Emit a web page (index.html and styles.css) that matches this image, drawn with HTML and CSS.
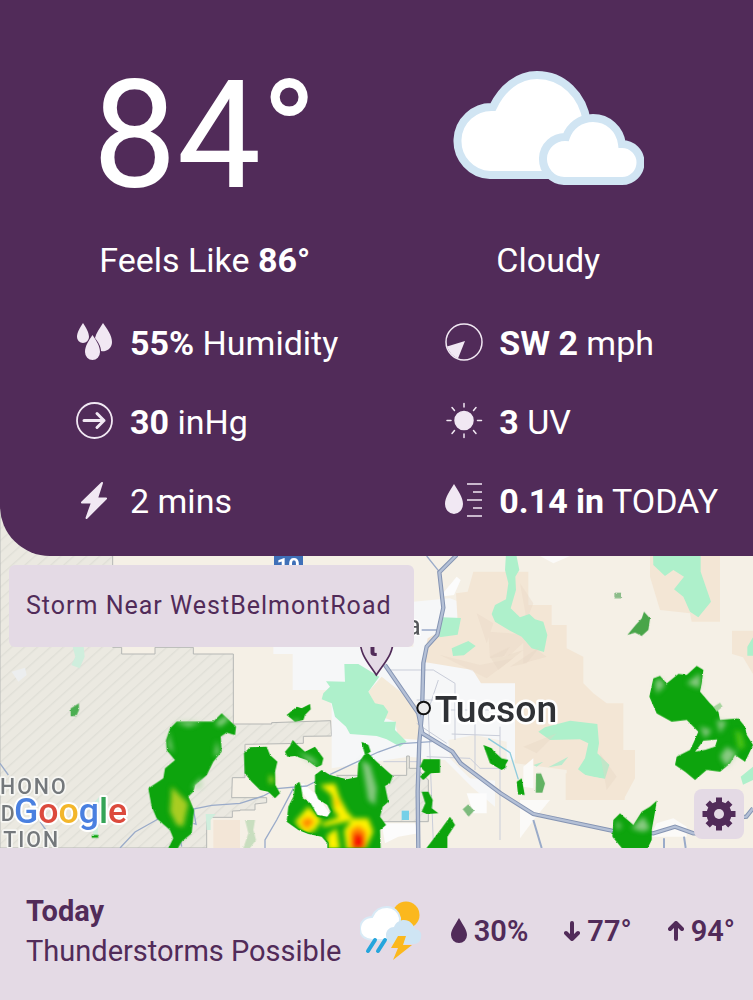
FILE: index.html
```html
<!DOCTYPE html>
<html lang="en">
<head>
    <meta charset="UTF-8">
    <meta name="viewport" content="width=device-width, initial-scale=1.0">
    <title>Weather</title>
    <link rel="stylesheet" href="styles.css">
</head>
<body>
    <main class="app">
        <section class="current">
            <div class="summary">
                <div class="summary-col">
                    <div class="temp">84°</div>
                    <div class="label">Feels Like <b>86°</b></div>
                </div>
                <div class="summary-col">
                    <div class="sky">
                        <svg class="cloud" viewBox="0 0 192 116">
                            <path d="M38 105a33 33 0 0 1 3-68C50 18 66 5 85 5c26 0 46 20 50 47v53z" fill="#fff" stroke="#d1e5f3" stroke-width="8"/>
                            <path d="M112 111a22 22 0 0 1 2-44c4-11 14-19 27-19 15 0 27 11 29 26a18.500 18.500 0 0 1 0 37z" fill="#fff" stroke="#d1e5f3" stroke-width="8"/>
                        </svg>
                    </div>
                    <div class="label">Cloudy</div>
                </div>
            </div>
            <ul class="details">
                <li>
                    <svg class="icon" viewBox="0 0 38 38" fill="#f1e8f3">
                        <path d="M7 0c3 5 6 9 6 14a6 6 0 0 1-12 0c0-5 3-9 6-14zM27 0c4 6 9 12 9 19a9 9 0 0 1-11 9c0-5-3-9-6-13 1-5 5-10 8-15z"/>
                        <path d="M16.500 12c4 6 7.500 11 7.500 17a7.500 8 0 0 1-15 0c0-6 3.500-11 7.500-17z"/>
                    </svg>
                    <span><b>55%</b> Humidity</span>
                </li>
                <li>
                    <svg class="icon" viewBox="0 0 38 38" fill="none" stroke="#f1e8f3">
                        <circle cx="19" cy="19" r="18" stroke-width="1.500"/>
                        <path d="M20 18L2 23.500C4 29 7 33 13 35.500z" fill="#f1e8f3" stroke="none"/>
                    </svg>
                    <span><b>SW 2</b> mph</span>
                </li>
                <li>
                    <svg class="icon" viewBox="0 0 38 38" fill="none" stroke="#f1e8f3">
                        <circle cx="18.500" cy="18.500" r="17.500" stroke-width="1.800"/>
                        <path d="M8 18.500h20M21 11.500l7 7-7 7" stroke-width="3" stroke-linecap="round" stroke-linejoin="round"/>
                    </svg>
                    <span><b>30</b> inHg</span>
                </li>
                <li>
                    <svg class="icon" viewBox="0 0 38 38" fill="#f1e8f3" stroke="#f1e8f3" stroke-width="1.500" stroke-linecap="round">
                        <circle cx="19" cy="18.500" r="9"/>
                        <path d="M19 1.500V5M19 32v3.500M2 18.500h4M32.500 18.500h4M7 5.500l2.500 3M31 5.500l-2.500 3M7 31.500l2.500-3M31 31.500l-2.500-3"/>
                    </svg>
                    <span><b>3</b> UV</span>
                </li>
                <li>
                    <svg class="icon" viewBox="0 0 38 38" fill="#f1e8f3" stroke="#f1e8f3" stroke-width="2" stroke-linejoin="round">
                        <path d="M26 2L6 21.500h10L10.500 37 30 17.500H21z"/>
                    </svg>
                    <span>2 mins</span>
                </li>
                <li>
                    <svg class="icon" viewBox="0 0 38 38" fill="#f1e8f3">
                        <path d="M9 3c4 7 9 13 9 20a9 10 0 0 1-18 0c0-7 5-13 9-20z"/>
                        <path d="M22 3h15M28 11h9M22 19h15M28 27h9M22 35h15" stroke="#f1e8f3" stroke-width="1.600"/>
                    </svg>
                    <span><b>0.14 in</b> TODAY</span>
                </li>
            </ul>
        </section>

        <section class="radar">
            <svg class="map" viewBox="0 -105 2259 1029" preserveAspectRatio="xMidYMid slice" role="img" aria-label="Radar map of Tucson">
                <defs>
                    <pattern id="hatch" width="26" height="26" patternUnits="userSpaceOnUse" patternTransform="rotate(48)">
                        <rect width="26" height="26" fill="#ebe9e1"/>
                        <rect width="4" height="26" fill="#e0dfd7"/>
                    </pattern>
                    <filter id="soft" x="-30%" y="-30%" width="160%" height="160%"><feGaussianBlur stdDeviation="8"/></filter>
                    <!-- ragged radar edges -->
                    <filter id="ragged" x="-5%" y="-5%" width="110%" height="110%">
                        <feTurbulence type="fractalNoise" baseFrequency="0.13" numOctaves="1" seed="4" result="noise"/>
                        <feDisplacementMap in="SourceGraphic" in2="noise" scale="7" xChannelSelector="R" yChannelSelector="G"/>
                        <feGaussianBlur stdDeviation="0.500"/>
                    </filter>
                    <clipPath id="stormClip">
                        <path d="M230 710L245 695 270 710 320 722 356 716 360 670 385 650 450 710 428 738 438 785 420 800 412 830 430 855 414 870 416 924H266V908L245 885 205 877 175 865 146 842 150 800 165 770 178 735 186 775 210 794 232 830 262 836 278 815 266 792 240 775 228 752z"/>
                    </clipPath>
                </defs>
                <rect y="-105" width="2259" height="1029" fill="#f5f0e6"/>

                <!-- land -->
                <path d="M0-105h338v427h27v20h100v-20h115v20h120v210h115v-4l177-6 3 46-85 1v21l-174 3h-1v100h-38l-2 60h105v15l-35 4v18h-45v2l-23 1v19h-77v92H0z" fill="url(#hatch)" stroke="#b5b7b5" stroke-width="3"/>
                <path d="M218 320h33l3 30-15 35-25-10 12-25zM280 790l18-20-5 120h-14z" fill="#cfeedd"/>
                <path d="M35 395l40-12 5 22-25 20z" fill="#eceeef"/>
                <path d="M640 840h80v84h-80z" fill="#f3e6d7"/>
                <path d="M617 822h30l-15 18v30h-12z" fill="#cfeedd"/>
                <g transform="translate(720)">
                    <path d="M100 320h420V185l110-10 90 35v60l-20 60 25 90h145v230l-105 20v130l-70-60-80-80-110-10-100 15-130 20V500l-15-50H158V342h-58z" fill="#f6f7f8"/>
                    <path d="M385 455l40-45 50 40 60 50 5 100-65-5-10-50-40-15z" fill="#f4ead9"/>
                    <path d="M625 600l80-15 95 20v120l-110-10-60-60z" fill="#f5f0e6"/>
                    <path d="M600 170l50-60 12 10-20 45zM680 760h60v60h-40zM425 850h100l10 30-60 10-40 20zM175 740l15-10 45 40 40 60-40-5z" fill="#fcfcfc"/>
                    <path d="M700 95h165v100h70v60h45v70l50 25v80l30 30 40 30h50v140h35v85l-35 65h-170v-90l-155-20V430h-102l-25-40-150-25 15-70 90-50-5-85 35-5z" fill="#f3e6d5"/>
                    <path d="M1230-20h210v265h-85l-5-25-90-10-30-100z" fill="#f3e6d5"/>
                    <path d="M313 372H355L418 410 385 455 405 490 430 495 445 515 432 545H468L465 570 500 605 480 620 440 598 410 588 330 582 318 560 285 530 275 490 245 478 250 460 270 440 258 424 315 425zM605 232l58 2-10 50-55 8zM635 325l50-22 22 15-35 28-33 2z" fill="#aef0cb"/>
                    <path d="M745 275l130 10-65 60-60 10M600 345l120 30 100-20-80 60M850 300l70 50-70 20M840 130l40 60-20 50M710 220l50 30-20 60" fill="#e9d8c6" opacity=".4"/>
                </g>
                <g transform="translate(1470)">
                    <path d="M48 40h30L88 90 76 110 78 150 62 205 90 232 118 222 135 238 160 245 172 285 162 336 125 325 95 290 60 272 15 245 5 222 15 195 48 178 55 130 45 90z" fill="#aef0cb"/>
                    <path d="M488-10h144L632 95 663 185 625 232 600 215 580 170 552 148 582 110 550 90 525 108 490 75z" fill="#aef0cb"/>
                    <path d="M726 272h63v130l-30-50-33-10z" fill="#f3e6d5"/>
                    <path d="M145 575L165 562 240 542 322 552 327 610 322 640 358 675 345 716 290 708 264 688 285 655 295 610 270 598 180 600zM772 320l17-28v55h-17zM752 710l37-30v40l-30 14z" fill="#aef0cb"/>
                    <path d="M130 675l30-10-20 15zM175 682l60-32-20 25z" fill="#b8ecce"/>
                    <path d="M227 700h37l80 18 60-18v80H227z" fill="#f3e6d5"/>
                    <path d="M100 680l30-25v90l-30-5zM90 780h90l-45 55-45 60zM500 850l50-15 40 25v30H480zM150 48h90l-50 22z" fill="#fbfaf8"/>
                    <path d="M0 350l60-30-20 30 60-20-75 60zM100 620l100-40-60 60zM330 640l50 70-30 40zM60 380l90-60-40 50z" fill="#e6d5c2" opacity=".35"/>
                </g>

                <!-- roads -->
                <path d="M1165 390h135l65 40v170M1280 650l130 5 30 30h80M1425 550v140M1250 550l90 60M1315 420l-30 90 15 400M1350 510h150M1355 582l145 5M1500 560v340M1250 480h60M1150 665h110" fill="none" stroke="#c9cdd9" stroke-width="3"/>
                <path d="M1010 706h210v-58h8v37h22l35 35v125h-135z" fill="url(#hatch)" stroke="#b5b7b5" stroke-width="3"/>
                <path d="M1205 812h22v28h-22z" fill="#75d0e8"/>
                <path d="M0 670l25 35M120 845l25 35M360 924l45-48 80-45 90-23 60-12 85-6 70-22 40-22 90-8 50-25 85-40 80-37 70-25 90-6M880 745l-50 95-35 60v30M1280 48l40 50M580 808l8 45-8-3M540 890l5 30M1265 270h50" fill="none" stroke="#9aabc9" stroke-width="4"/>
                <path d="M1465 596l65 42 25 80" fill="none" stroke="#8fcbdd" stroke-width="4"/>
                <path d="M1600 840l25 84M1992 895v29M2052 890l5 34" fill="none" stroke="#9aabc9" stroke-width="6"/>
                <path d="M1370 45l-52 52 12 106-18 82-32 35-10 50-4 150-8 85-5 150 2 169M1155 375l100 145 12 60 90 55 25 35 120 90 98 62 235 50 125 8 65-20 55 20h25M2259 805l-20 25-20 2" fill="none" stroke="#8594b3" stroke-width="13"/>
                <path d="M1370 45l-52 52 12 106-18 82-32 35-10 50-4 150-8 85-5 150 2 169M1155 375l100 145 12 60 90 55 25 35 120 90 98 62 235 50 125 8 65-20 55 20h25M2259 805l-20 25-20 2" fill="none" stroke="#b4c0d6" stroke-width="7"/>

                <!-- precipitation -->
                <g filter="url(#ragged)" fill="#08a408">
                    <path d="M212 505l25-15v20l-8 18h-17z" fill="#4cae51"/>
                    <path d="M530 545H640L665 520 708 560 705 585 680 578 662 590 665 635 640 665 620 705 585 735 580 755 565 770 582 810 575 880 545 905 530 930H502L520 895 510 870 470 835 455 800 445 745 490 715 495 685 525 660 500 630 498 600 510 565z"/>
                    <path d="M275 885h20v8h-20z"/>
                    <g transform="translate(720)">
                        <path d="M140 525L170 500 185 505 210 492 212 508 195 525 190 540 165 545z"/>
                        <path d="M12 640L30 622 80 620 90 645 112 665 105 695 106 735 120 760 105 775 85 755 60 750 35 725 14 700z"/>
                        <path d="M135 635L150 618 158 600 172 615 195 635 225 620 250 655 245 675 230 682 200 660 165 648 142 650z"/>
                        <path d="M225 705L245 690 270 705 320 718 352 712 355 670 372 645 385 640 410 665 458 708 450 730 435 738 445 785 428 800 420 830 438 855 420 870 422 930H262V910L245 890 205 882 175 870 140 845 145 800 160 770 165 735 178 725 184 745 188 775 212 790 232 825 262 830 272 815 262 795 235 778 225 755z"/>
                        <path d="M365 605L385 615 392 635 375 645z"/>
                        <path d="M540 680L550 658H600V698L572 700 550 720 540 710 555 695zM545 755H565L578 780 575 805 595 820 560 822 545 815 556 790zM555 930L605 865 630 830 645 855 622 890V930zM730 615L755 625 775 655 800 680 785 690 750 670z"/>
                        <path d="M668 808L685 793 702 812 686 830z" fill="#7dbb7d"/>
                        <path d="M15 840H45L40 870 48 900 30 924H10L25 880z" fill="#c8debf"/>
                    </g>
                    <g transform="translate(1470)">
                        <path d="M373 158h20v17h-20z" fill="#8bbc89"/>
                        <path d="M412 285L437 255 455 235 462 215 480 235 475 270 455 288 435 278z" fill="#48a54a"/>
                        <path fill-rule="evenodd" d="M478 470L490 415 510 408 530 430 565 402 590 405 620 378 640 390 635 430 630 455 660 490 685 515 690 540 745 535 765 560 770 585 789 615 765 665 735 645 720 670 690 695 650 690 615 720 585 695 555 675 560 650 600 630 612 605 625 575 590 540 545 545 500 520zM615 635L640 602 682 598 675 620 645 630z"/>
                        <path d="M0 625L18 640 35 655 55 660 40 685 20 678 0 655zM80 725L95 715 104 765 84 763z"/>
                        <path d="M138 700h15l12 30-8 28h-20z" fill="#62b264"/>
                        <path d="M370 840L390 820 430 855 455 815 480 800 500 782 495 815 485 870 485 900 470 930H400L367 890z"/>
                        <path d="M670 500L690 488 698 500 680 515z" fill="#a9d5a0"/>
                    </g>
                </g>
                <g filter="url(#soft)">
                    <path d="M515 740l50 50-15 70-20-5-20-40z" fill="#a8cd22"/>
                    <path d="M505 570l15 70-15-20zM525 545h80l-40 15zM645 550l35-25 5 15-25 20zM575 745h30v-35zM650 600l8 40-15 10z" fill="#b4dcab" opacity=".8"/>
                    <path d="M1085 660l20 120 20 15 5-50-20-70zM895 635l45 20 20 25-40-20zM870 540h30l-5 10z" fill="#a5d29e" opacity=".8"/>
                    <path d="M808 705l10 5 2 20-12 0z" fill="#b7dc20"/>
                    <path d="M1965 425l15-10 15 20-25 25zM2060 430l40-30v45zM2100 560l35 10-20 25zM2160 650l20-30 30 20-30 40zM1895 865l35-35 20 35-20 10zM2150 540l30 5-20 35zM1850 840l15 20-15 10z" fill="#a9d5a0" opacity=".8"/>
                    <path d="M2205 570l20 10 10 40-20 10z" fill="#4dc512"/>
                </g>
                <g transform="translate(720)" clip-path="url(#stormClip)">
                    <g filter="url(#soft)">
                        <path d="M240 735L285 730 300 775 325 820 300 835 280 810 275 765zM165 845L205 800 245 840 225 870 195 885zM262 885L290 865 300 930H262zM320 930L312 870 340 835 385 835 400 875 375 930zM245 850L330 820 340 840 250 860z" fill="#fff200"/>
                        <path d="M180 845l25-15 20 15-25 25zM330 870l25-15 25 20-5 50h-45zM283 765l15 30-8 5z" fill="#ff8a00"/>
                        <path d="M338 885l20-8 18 20-5 30h-35z" fill="#f51800"/>
                    </g>
                </g>

                <!-- markers and place names -->
                <text class="region" x="0" y="762">HONO</text>
                <text class="region" x="2" y="844">D</text>
                <text class="region" x="10" y="922">TION</text>
                <text class="google" x="42" y="850"><tspan fill="#4a80e0">G</tspan><tspan fill="#dc4a3d">o</tspan><tspan fill="#f3b62b">o</tspan><tspan fill="#4a80e0">g</tspan><tspan fill="#35a457">l</tspan><tspan fill="#dc4a3d">e</tspan></text>
                <g transform="translate(720)">
                    <path d="M102-20h87V110h-87z" fill="#3f70b8"/>
                    <text class="shield" x="145" y="99">10</text>
                    <path d="M409 405c-28-42-49-62-49-110a49 49 0 0 1 100 0c0 48-23 68-51 110z" fill="#e4dae5" stroke="#512b59" stroke-width="5"/>
                    <text class="pin-text" x="386" y="349">t</text>
                    <text class="place" x="497" y="285">a</text>
                    <circle cx="551" cy="504" r="19" fill="#ececec" stroke="#111" stroke-width="6"/>
                    <text class="city" x="584" y="546">Tucson</text>
                </g>
            </svg>
            <div class="alert">Storm Near WestBelmontRoad</div>
            <button class="settings" type="button" aria-label="Settings">
                <svg viewBox="0 0 34 34">
                    <circle cx="17" cy="17" r="12.500" fill="#512b59"/>
                    <path d="M17 .500v33M.500 17h33M5.700 5.700l22.600 22.600M28.300 5.700L5.700 28.300" stroke="#512b59" stroke-width="6"/>
                    <circle cx="17" cy="17" r="5" fill="#e4dae5"/>
                </svg>
            </button>
        </section>

        <footer class="forecast">
            <div class="day">
                <b>Today</b><br>
                Thunderstorms Possible
            </div>
            <svg class="storm-icon" viewBox="0 0 64 60">
                <circle cx="46" cy="14" r="13.500" fill="#fbb81d"/>
                <path d="M12 39C4 38 0 34 0 28c0-7 5-12 12-12C15 9 20 6 27 6c7 0 12 5 13 11l-1 22z" fill="#fff" stroke="#d8eaf6" stroke-width="2"/>
                <path d="M33 43c-5-1-7-5-7-9 0-5 4-8 8-8 2-5 6-7 10-7 6 0 9 4 11 9 5 1 7 4 6 8 0 4-3 7-7 7z" fill="#cfe5f4"/>
                <path d="M15 39L8 50M25 39l-7 11" stroke="#25a5dc" stroke-width="4" stroke-linecap="round"/>
                <path d="M38 35h8l-3 9h9L33 59l5-12h-7z" fill="#fbb81d"/>
            </svg>
            <div class="stat">
                <svg class="drop" viewBox="0 0 16 26" fill="#512b59"><path d="M8 0c4 7 8 12 8 17a8 8 0 0 1-16 0C0 12 4 7 8 0z"/></svg>
                30%
            </div>
            <div class="stat">
                <svg class="arrow" viewBox="0 0 16 20"><path d="M8 2v16M2 12l6 6 6-6"/></svg>
                77°
            </div>
            <div class="stat">
                <svg class="arrow" viewBox="0 0 16 20"><path d="M8 18V2M2 8l6-6 6 6"/></svg>
                94°
            </div>
        </footer>
    </main>
</body>
</html>
```
FILE: styles.css
```css
* {
    box-sizing: border-box;
}

body {
    margin: 0;
    background-color: #e4dae5;
    font-family: Roboto, "Liberation Sans", sans-serif;
}

.app {
    display: flex;
    flex-direction: column;
    min-height: 100vh;
}

/* Current conditions */
.current {
    position: relative;
    z-index: 1;
    padding: 61px 0 35px;
    background-color: #512b59;
    color: #fff;
    border-bottom-left-radius: 50px;
}

.summary {
    display: grid;
    grid-template-columns: 1fr 1fr;
    padding: 0 33px;
    text-align: center;
}

.temp {
    height: 150px;
    font-size: 150px;
    line-height: 150px;
}

.sky {
    height: 150px;
    padding-top: 9px;
}

.cloud {
    width: 192px;
    height: 116px;
}

.label {
    margin-top: 29px;
    font-size: 34px;
    line-height: 40px;
}

.details {
    display: grid;
    grid-template-columns: 6fr 5fr;
    row-gap: 39px;
    margin: 43px 0 0;
    padding: 0 0 0 76px;
    list-style: none;
    font-size: 34px;
    line-height: 40px;
}

.details li {
    display: flex;
    gap: 16px;
    white-space: nowrap;
}

.icon {
    flex: none;
    width: 38px;
    height: 38px;
}

/* Radar map */
.radar {
    position: relative;
    display: flex;
    flex: 1;
    justify-content: space-between;
    align-items: flex-start;
    min-height: 343px;
    margin-top: -51px;
    padding: 60px 9px 9px;
    overflow: hidden;
}

.map {
    position: absolute;
    top: 0;
    left: 0;
    width: 100%;
    height: 100%;
}

.map text {
    paint-order: stroke;
    stroke-linejoin: round;
}

.shield {
    fill: #fff;
    font-size: 60px;
    font-weight: 700;
    text-anchor: middle;
}

.pin-text {
    fill: #512b59;
    font-size: 72px;
    font-weight: 900;
}

.place {
    fill: #55585b;
    stroke: #fff;
    stroke-width: 8px;
    font-size: 84px;
}

.city {
    fill: #303236;
    stroke: #fff;
    stroke-width: 15px;
    font-size: 112px;
    font-weight: 500;
}

.region {
    fill: #74787c;
    stroke: #f7f7f4;
    stroke-width: 10px;
    font-size: 64px;
    font-weight: 500;
    letter-spacing: 6px;
}

.google {
    stroke: #fff;
    stroke-width: 12px;
    font-size: 107px;
    font-weight: 500;
}

.alert {
    position: relative;
    padding: 25px 22px 25px 17px;
    border-radius: 6px;
    background-color: #e4dae5;
    color: #512b59;
    font-size: 25px;
    line-height: 32px;
    letter-spacing: 1px;
}

.settings {
    position: relative;
    align-self: flex-end;
    display: flex;
    justify-content: center;
    align-items: center;
    width: 50px;
    height: 50px;
    padding: 0;
    border: 0;
    border-radius: 8px;
    background-color: #e4dae5;
}

.settings svg {
    width: 34px;
    height: 34px;
}

/* Daily forecast */
.forecast {
    display: flex;
    align-items: center;
    padding: 43px 18px 29px 26px;
    color: #512b59;
    font-size: 29px;
    line-height: 40px;
    white-space: nowrap;
}

.day {
    flex: 1;
}

.storm-icon {
    width: 64px;
    height: 60px;
}

.stat {
    display: flex;
    align-items: center;
    gap: 7px;
    margin-left: 36px;
    font-weight: 600;
}

.storm-icon + .stat {
    margin-left: 27px;
}

.drop {
    width: 16px;
    height: 26px;
}

.arrow {
    width: 16px;
    height: 20px;
    fill: none;
    stroke: #512b59;
    stroke-width: 4;
    stroke-linecap: round;
    stroke-linejoin: round;
}
```
